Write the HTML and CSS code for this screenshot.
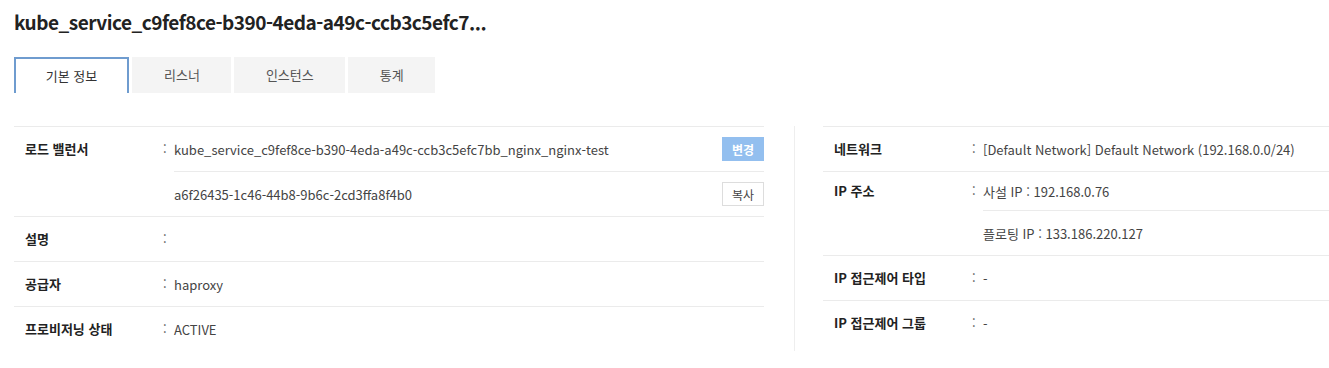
FILE: index.html
```html
<!DOCTYPE html>
<html lang="ko">
<head>
    <meta charset="UTF-8">
    <meta name="viewport" content="width=device-width, initial-scale=1.0">
    <title>로드 밸런서 상세</title>
    <link rel="stylesheet" href="styles.css">
</head>
<body>
    <div class="page">
        <h1 class="title">kube_service_c9fef8ce-b390-4eda-a49c-ccb3c5efc7...</h1>

        <ul class="tabs">
            <li class="tab active">기본 정보</li>
            <li class="tab">리스너</li>
            <li class="tab">인스턴스</li>
            <li class="tab">통계</li>
        </ul>

        <div class="detail">
            <!-- 왼쪽 정보 -->
            <div class="col col-left">
                <div class="row">
                    <div class="label">로드 밸런서</div>
                    <div class="colon">:</div>
                    <div class="values">
                        <div class="item">
                            <span>kube_service_c9fef8ce-b390-4eda-a49c-ccb3c5efc7bb_nginx_nginx-test</span>
                            <button class="btn btn-blue">변경</button>
                        </div>
                        <div class="item sub">
                            <span>a6f26435-1c46-44b8-9b6c-2cd3ffa8f4b0</span>
                            <button class="btn">복사</button>
                        </div>
                    </div>
                </div>
                <div class="row">
                    <div class="label">설명</div>
                    <div class="colon">:</div>
                    <div class="values"><div class="item"></div></div>
                </div>
                <div class="row">
                    <div class="label">공급자</div>
                    <div class="colon">:</div>
                    <div class="values"><div class="item">haproxy</div></div>
                </div>
                <div class="row">
                    <div class="label">프로비저닝 상태</div>
                    <div class="colon">:</div>
                    <div class="values"><div class="item">ACTIVE</div></div>
                </div>
            </div>

            <!-- 오른쪽 정보 -->
            <div class="col col-right">
                <div class="row">
                    <div class="label">네트워크</div>
                    <div class="colon">:</div>
                    <div class="values"><div class="item">[Default Network] Default Network (192.168.0.0/24)</div></div>
                </div>
                <div class="row">
                    <div class="label short-label">IP 주소</div>
                    <div class="colon short-label">:</div>
                    <div class="values">
                        <div class="item short">사설 IP : 192.168.0.76</div>
                        <div class="item sub">플로팅 IP : 133.186.220.127</div>
                    </div>
                </div>
                <div class="row">
                    <div class="label">IP 접근제어 타입</div>
                    <div class="colon">:</div>
                    <div class="values"><div class="item">-</div></div>
                </div>
                <div class="row">
                    <div class="label">IP 접근제어 그룹</div>
                    <div class="colon">:</div>
                    <div class="values"><div class="item">-</div></div>
                </div>
            </div>
        </div>
    </div>
</body>
</html>
```

FILE: styles.css
```css
/* 기본 스타일 */
body {
    margin: 0;
    font-family: "Noto Sans CJK KR", sans-serif;
    color: #333;
    background: #fff;
    overflow: hidden;
}

.page {
    padding: 10px 0 0 14px;
}

.title {
    margin: 0;
    font-size: 19px;
    letter-spacing: -0.5px;
    line-height: 24px;
    font-weight: bold;
    color: #222;
}

/* 탭 */
.tabs {
    list-style: none;
    margin: 23px 0 0;
    padding: 0;
    display: flex;
    gap: 3px;
}

.tab {
    height: 36px;
    line-height: 36px;
    padding: 0 31px 0 32px;
    font-size: 13px;
    color: #555;
    background: #f4f4f4;
    box-sizing: border-box;
}

.tab.active {
    background: #fff;
    color: #333;
    border: 2px solid #6f9ccf;
    border-bottom: none;
    line-height: 34px;
    padding: 0;
    width: 115px;
    text-align: center;
}

/* 상세 정보 */
.detail {
    display: flex;
    margin-top: 33px;
}

.col-left {
    width: 750px;
    padding-right: 30px;
    border-right: 1px solid #eee;
}

.col-right {
    flex: 1;
    padding-left: 28px;
}

.row {
    display: grid;
    grid-template-columns: 138px 11px 1fr;
    padding-left: 11px;
    border-top: 1px solid #ebebeb;
    font-size: 13px;
}

.label {
    font-weight: bold;
    color: #222;
    line-height: 44px;
}

.colon {
    line-height: 44px;
    color: #555;
}

.short-label {
    line-height: 38px;
}

.values {
    display: flex;
    flex-direction: column;
}

.item {
    height: 44px;
    display: flex;
    align-items: center;
    justify-content: space-between;
    color: #444;
}

.item.short {
    height: 38px;
}

.item.sub {
    border-top: 1px solid #ebebeb;
}

.btn {
    width: 42px;
    height: 24px;
    font-family: inherit;
    font-size: 12px;
    color: #444;
    background: #fff;
    border: 1px solid #ddd;
    padding: 0;
    cursor: pointer;
}

.btn-blue {
    color: #fff;
    font-weight: bold;
    background: #93bfef;
    border-color: #93bfef;
}
```
